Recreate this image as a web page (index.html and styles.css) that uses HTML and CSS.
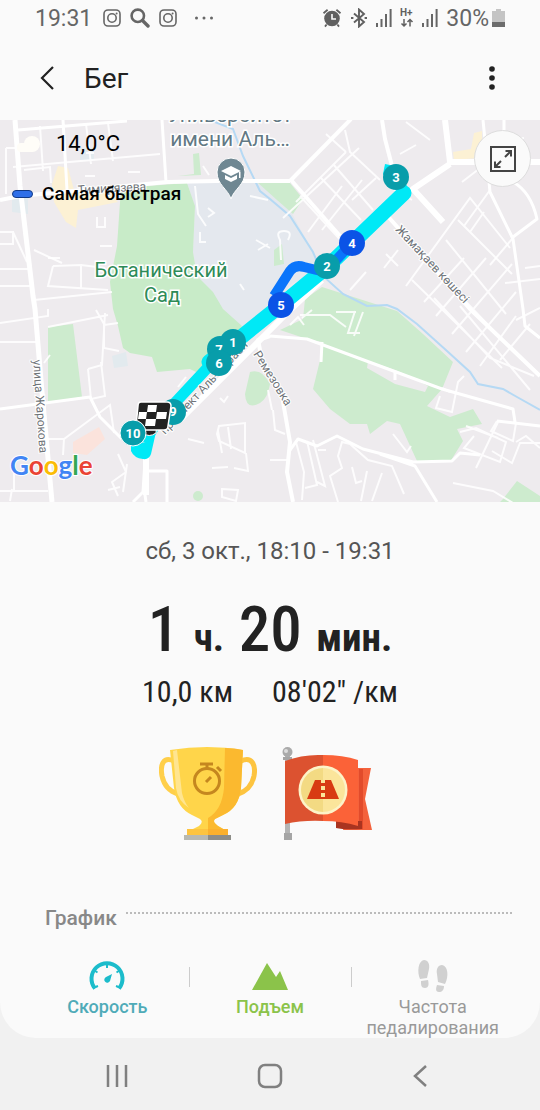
FILE: index.html
```html
<!DOCTYPE html>
<html lang="ru">
<head>
  <meta charset="UTF-8">
  <meta name="viewport" content="width=device-width, initial-scale=1">
  <title>Бег</title>
  <link rel="stylesheet" href="styles.css">
</head>
<body>
  <div class="screen">
    <!-- Status bar -->
    <div class="status">
      <div class="status-left">
        <span class="time">19:31</span>
        <svg width="18" height="18" viewBox="0 0 18 18" fill="none" stroke="#666" stroke-width="1.6">
          <rect x="1" y="1" width="16" height="16" rx="4"/>
          <circle cx="9" cy="9" r="4.2"/>
          <circle cx="13.6" cy="4.4" r="1" fill="#666" stroke="none"/>
        </svg>
        <svg width="20" height="20" viewBox="0 0 20 20" fill="none" stroke="#666">
          <circle cx="7.8" cy="7.8" r="6.2" stroke-width="2.6"/>
          <path d="M12.5 12.5L18 18" stroke-width="3.4" stroke-linecap="round"/>
        </svg>
        <svg width="18" height="18" viewBox="0 0 18 18" fill="none" stroke="#666" stroke-width="1.6">
          <rect x="1" y="1" width="16" height="16" rx="4"/>
          <circle cx="9" cy="9" r="4.2"/>
          <circle cx="13.6" cy="4.4" r="1" fill="#666" stroke="none"/>
        </svg>
        <svg class="dots" width="20" height="6" viewBox="0 0 20 6" fill="#666">
          <circle cx="2.5" cy="3" r="1.5"/><circle cx="10" cy="3" r="1.5"/><circle cx="17.5" cy="3" r="1.5"/>
        </svg>
      </div>
      <div class="status-right">
        <svg width="20" height="20" viewBox="0 0 20 20" fill="none" stroke="#606060">
          <circle cx="10" cy="10.5" r="7.8" fill="#606060" stroke="none"/>
          <path d="M1.5 5.2L5.6 1.8M18.5 5.2L14.4 1.8M4.6 16.5L3 18.6M15.4 16.5L17 18.6" stroke-width="1.8"/>
          <path d="M10 6v5h4" stroke="#fafafa" stroke-width="1.6"/>
        </svg>
        <svg width="18" height="20" viewBox="0 0 18 20" fill="none" stroke="#606060" stroke-width="1.9">
          <path d="M4 5.5l10 8.500-5 4.500V1.500l5 4.500L4 14.500"/>
          <path d="M1 10h2.400M14.600 10H17"/>
        </svg>
        <svg width="16" height="18" viewBox="0 0 16 18" fill="#666">
          <path d="M0 14h2v4H0zM4.500 10h2v8h-2zM9 5h2v13H9zM13.600 0h2v18h-2z"/>
        </svg>
        <svg width="14" height="20" viewBox="0 0 14 20">
          <text class="net" x="0" y="8">H+</text>
          <path d="M4 11v7M1.500 15.500L4 18l2.500-2.500M10 18.500v-7M7.500 14L10 11.500 12.500 14" fill="none" stroke="#606060" stroke-width="1.500"/>
        </svg>
        <svg width="16" height="18" viewBox="0 0 16 18" fill="#666">
          <path d="M0 14h2v4H0zM4.500 10h2v8h-2zM9 5h2v13H9zM13.600 0h2v18h-2z"/>
        </svg>
        <span class="battery">30%
          <svg width="13" height="18" viewBox="0 0 13 18">
            <path d="M4 0h5v2h4v11H0V2h4z" fill="#c4c4c4"/>
            <path d="M0 13h13v5H0z" fill="#6c6c6c"/>
          </svg>
        </span>
      </div>
    </div>

    <!-- Title bar -->
    <header class="header">
      <button class="icon-btn" aria-label="Назад">
        <svg width="16" height="26" viewBox="0 0 16 26" fill="none" stroke="#222" stroke-width="2.2">
          <path d="M14 2L3 13l11 11"/>
        </svg>
      </button>
      <h1>Бег</h1>
      <button class="icon-btn menu" aria-label="Ещё">
        <svg width="6" height="26" viewBox="0 0 6 26" fill="#222">
          <circle cx="3" cy="4" r="2.8"/><circle cx="3" cy="13" r="2.8"/><circle cx="3" cy="22" r="2.8"/>
        </svg>
      </button>
    </header>

    <!-- Map -->
    <div class="map">
      <svg class="map-img" viewBox="0 0 540 382">
        <rect width="540" height="382" fill="#eeebee"/>
        <!-- areas -->
        <path fill="#e4e8ee" d="M187 63L262 62 290 90 313 132 318 150 290 165 262 205 240 210 223 189 197 156 193 132 195 86z"/>
        <g fill="#fcf1d4">
          <path d="M58 46l10 2 6 22 36 4 8 8-40 8-2 18-10-6-12-20-2-18z"/>
          <path d="M453 32l18-3 3-16 8-2v22l8 4-36 3z"/>
        </g>
        <path fill="#fbe3dc" d="M73 322l26-15 6 12-18 16-14-2z"/>
        <path fill="#e2eaee" d="M112 236l14-4 2 14-14 2zM12 74l16 2v18l-16-2zM80 28h14v12H80z"/>
        <g fill="#cdebce">
          <path fill="#c8ebc8" d="M121 68L187 63 195 86 193 132 197 156 213 172 223 189 242 206 213 249 200 254 190 249 157 252 152 237 130 233 123 228 118 206 113 189 110 162 117 126z"/>
          <path d="M48 207L73 204 82 277 48 282zM257 62l33 1 13 16-10 15-16-14z"/>
          <path d="M178 56l16-2-1-20 6-1 2 22zM274 130l8-6 2 20-10 2z"/>
          <path d="M280 210L303 199 305 179 322 167 397 191 423 214 453 242 442 269 427 286 450 297 473 289 482 304 457 309 463 321 450 342 417 341 400 304 387 301 370 314 367 304 350 304 330 289 313 269 322 232 322 222 307 219z"/>
          <path d="M250 252q12-4 20 12-2 14-10 19-14 8-15-9z"/>
          <path d="M503 379l14-18 23 15v6h-40z"/>
          <circle cx="198" cy="376" r="5"/>
        </g>
        <path fill="#eeebee" d="M368 241l30 10 30 15-3 6-30-8-28-16z"/>
        <!-- river -->
        <path fill="none" stroke="#b5d9f4" stroke-width="2" d="M207 -1L233 9 243 36 260 71 270 79 290 96 313 132 323 156 343 174 367 186 387 185 397 189 417 204 447 231 470 252 478 264 503 269 517 277 540 290"/>
        <!-- small streets -->
        <g fill="none" stroke="#fff" stroke-width="2" stroke-opacity=".85">
          <path d="M13 47l147-13M40 6l3 45M86 4l5 40M108 3l5 38M24 50l26-3 1 16M6 28v46M6 28h12M0 112h13v12H0M13 112l14 30M0 166h30M34 180l78-8M53 146l-5 20 60 4M53 146l28-1v25M81 145l24 3M0 149h30M34 130l28 13"/>
          <path d="M195 66l3 28 8 12M97 97v10h8v-10M208 88l6 5-6 4M200 112v10h6M240 164l4 6M250 76l18 4M256 120l14 8M258 130l10-6M281 140l-1-20q-5-9 4-9t4 9M100 126h12M48 138h12M85 56h10M86 33h8M128 52h12M203 46l6 9"/>
          <path d="M0 203l48-7v-7M0 222h40M48 207l60-12M96 190l8 14v24l15 3M104 205l14-2M88 249l14-4 3-52M88 249l3 30 14-3-4-34M48 319h16l46-34 4 28M64 319l-1 16M14 340v30M0 371h48M10 381l2-12M118 334l8 18-14 10 6 14M108 370l12-3M127 344l-4 28M50 235l-6 8M217 314l2-8 26-3v30l-26-12zM222 333l-4-22M228 307l3 22M246 333l2 18-14-3M222 369l16 1-2 11-14-4z"/>
          <path d="M283 98l76-70M296 82l50-50M300 76l46 50M321 58l40 42M333 44l40 46M345 10l5 22 30 28M308 112l34-46M322 110l40-50M352 80l24-22M388 66l24 14M400 34l16-9M326 14l20 18M340 140l20-20M353 133l10-10M384 148l14-18M386 134l12 12M350 170l16-18"/>
          <path d="M430 20l-24-18M488 42l-26 20M524 18l-30 3"/>
          <path d="M406 166l64-88 40 50M412 160l90 88M432 146l76 80M446 120l60 74M458 100l54 54M424 182l40-44M436 196l50-58M452 214l60-70M466 232l50-60M480 246l36-50M490 70l-26 36M484 92l-14 20M534 256l-44-18-56-60M500 240l30-36M530 270l-70-84"/>
          <path d="M516 200l24-12M525 148l15-2M512 119l-22 26M505 163l35-4M440 276l-4 12 16 4 6-30 6-6M442 268l8 4"/>
          <path d="M300 195h30l16 12M355 191l-7 22h12M363 192l-9 24M336 192l20 0M304 205l-6-8-8 8M312 190l-10 8"/>
          <path d="M460 312l16-4 30 14-6 20-36-14 10-12M498 302l-22 46M497 301l-6 10 22 10 3-18M492 331l20 12 8-20h20M466 306l32 12M516 322l10-6 14 12"/>
          <path d="M296 322l8 30-2 28M307 321l10 44-12 3M313 320l12 46-8-4M318 330h8M338 382l-8-26 12-8-4-12 4-14 8 2 18 16 24 6 12 28M367 351l-6 30M382 353l-10 28M352 347l4 16 6-2M453 363l40 8 20 12M393 314l14 18 4-6M270 340h20M272 290l-4-20M273 290l2 20 10 4"/>
          <path d="M188 319l16 4M186 257l-8 10M220 278l4 4 4-6M212 348l16-1"/>
        </g>
        <!-- avenues -->
        <g fill="none" stroke="#fff" stroke-width="4" stroke-linejoin="round">
          <path d="M15 0L20 66 33 176 35 189 42 272 52 382" stroke-width="5"/>
          <path d="M0 80L20 76 167 62 217 61 290 61" stroke-width="4"/>
          <path d="M162 0L166 62M18 10L127 1M63 0L67 70" stroke-width="3"/>
          <path d="M351 -1L291 60 340 116M382 0L385 19 392 46"/>
          <path d="M445 0L450 42H540M450 44L413 69 443 102" stroke-width="6"/>
          <path d="M384 92L470 189 540 256"/>
          <path d="M483 0l3 30 4 42 23 47 10 70 2 17 15 12M513 62q18 10 24 37l-24 18M504 0v14" stroke-width="3"/>
          <path d="M270 216L307 219 442 269 513 289 515 302M497 301L540 306M322 222l-1 20M395 252v8" stroke-width="3"/>
          <path d="M270 216l-12 4 4 20 20 36 8 46-3 30 6 30" stroke-width="4"/>
          <path d="M290 330L298 319 317 326 337 316 363 329 413 342 452 341 460 333 480 335M380 334l35 12 22 36" stroke-width="3"/>
          <path d="M0 289L90 277 100 297 122 319" stroke-width="3"/>
          <path d="M322 160L290 190 180 300" stroke-width="6"/>
          <path d="M146 325L143 372 133 382M144 368l2 14M145 351h22v31" stroke-width="3"/>
          <path d="M146 325v50" stroke-width="6"/>
        </g>
        <!-- route -->
        <path fill="none" stroke="#00e9f6" stroke-width="11" stroke-linejoin="round" d="M144 322L158 301 212 243"/>
        <path fill="#00e9f6" d="M131 324l16-2 9-10-5 22q-2 6-8 5-9-1-12-8z"/>
        <path fill="none" stroke="#00e9f6" stroke-width="15" stroke-linejoin="round" stroke-linecap="round" d="M209 242L235 222 281 185 327 147 352 123 404 73"/>
        <path fill="#00e9f6" d="M385 44l10 2 12 20-14 2-10-14z"/>
        <path fill="none" stroke="#0a75fb" stroke-width="10" stroke-linejoin="round" d="M352 123L325 152 304 147Q295 144 290 151L274 176"/>
        <!-- street names -->
        <g class="street">
          <text x="78" y="74" transform="rotate(-3 78 74)">Тимирязева</text>
          <text x="395" y="110" transform="rotate(47 395 110)">Жамақаев көшесі</text>
          <text x="33" y="240" transform="rotate(86 33 240)">улица Жарокова</text>
          <text x="253" y="234" transform="rotate(58 253 234)">Ремезовка</text>
          <text x="165" y="315" transform="rotate(-47 165 315)">проспект Аль-Фараби</text>
        </g>
        <g class="uni">
          <text x="230" y="2">Университет</text>
          <text x="230" y="26">имени Аль…</text>
        </g>
        <g class="park">
          <text x="161" y="157">Ботанический</text>
          <text x="162" y="182">Сад</text>
        </g>
        <!-- university pin -->
        <path fill="#6f8792" stroke="#fff" d="M231 79c-3-10-14-14-14-27a14 14 0 0 1 28 0c0 13-11 17-14 27z"/>
        <path fill="#fff" d="M221 51l10-5 10 5-10 5zM225 55l6 3 6-3v4l-6 3-6-3zM239 52h1.500v6H239z"/>
        <!-- kilometre marks -->
        <g class="mark">
          <circle cx="173" cy="292" r="13"/><text x="173" y="296">9</text>
          <circle cx="220" cy="229" r="13"/>
          <circle cx="233" cy="222" r="13"/><text x="233" y="227">1</text>
          <text x="219" y="234">7</text>
          <circle cx="219" cy="243" r="13"/><text x="219" y="248">6</text>
          <circle cx="396" cy="57" r="13"/><text x="396" y="62">3</text>
          <circle class="fast" cx="352" cy="123" r="13"/><text x="352" y="128">4</text>
          <circle cx="327" cy="146" r="13"/><text x="327" y="151">2</text>
          <circle class="fast" cx="281" cy="185" r="13"/><text x="281" y="190">5</text>
        </g>
        <!-- finish flag -->
        <path fill="#222" stroke="#fff" d="M143 307l4-6h10l-1 12q-7 5-13 0z"/>
        <path fill="#222" stroke="#fff" stroke-width="1.5" d="M141 282h26q4 0 4 4l-3 20q0 4-4 4h-26q-3 0-2-4l2-20q0-4 3-4z"/>
        <path fill="#fff" d="M148 285h9l-1 7h-9zM157 292h10l-1 7h-10zM139 292h8l-1 7h-8zM146 299h10l-1 7h-10z"/>
        <g class="mark">
          <circle class="last" cx="133" cy="313" r="13"/><text x="133" y="318">10</text>
        </g>
        <text class="google" x="10" y="355"><tspan fill="#4285f4">G</tspan><tspan fill="#ea4335">o</tspan><tspan fill="#fbbc05">o</tspan><tspan fill="#4285f4">g</tspan><tspan fill="#34a853">l</tspan><tspan fill="#ea4335">e</tspan></text>
      </svg>
      <div class="legend">
        <div class="weather">
          <svg width="24" height="18" viewBox="0 0 24 18" fill="#fffdf8">
            <circle cx="15" cy="9" r="8"/><rect x="0" y="8" width="18" height="9" rx="4"/>
          </svg>
          <span>14,0°C</span>
        </div>
        <div class="fastest"><i></i>Самая быстрая</div>
      </div>
      <button class="expand" aria-label="На весь экран">
        <svg width="26" height="26" viewBox="0 0 26 26" fill="none" stroke="#444" stroke-width="2">
          <rect x="1" y="1" width="24" height="24"/>
          <path d="M15 11l6-6M15.500 5H21v5.500M11 15l-6 6M5 15.500V21h5.500"/>
        </svg>
      </button>
    </div>

    <!-- Workout summary -->
    <section class="summary">
      <p class="date">сб, 3 окт., 18:10 - 19:31</p>
      <p class="duration">1 <b>ч.</b> 20 <b>мин.</b></p>
      <p class="stats"><span>10,0 км</span><span>08'02" /км</span></p>
      <div class="awards">
        <svg width="98" height="98" viewBox="0 0 98 98">
          <g fill="none" stroke="#ffcf4a" stroke-width="5">
            <path d="M15 15C4 10 1 19 3 30q3 14 16 18"/>
            <path d="M82 15c11-5 15 4 13 15q-3 14-16 18" stroke="#fdc440"/>
          </g>
          <path fill="#ffd54a" d="M11 4Q49-2 84 4L82 42Q80 62 64 69L56 73Q53 76 59 80L66 84H32L40 80Q45 76 41 73L33 69Q18 62 15 42z"/>
          <path fill="#fbb92f" d="M66 2q10 0 18 2l-2 38q-2 20-18 27l-8 4q-3 3 3 7l7 4H49V72q14-8 16-30z"/>
          <path fill="#ffe590" d="M14 5l4-1 5 43q2 9 7 15-11-7-13-20z"/>
          <path fill="#fdc440" d="M28 83h41v8H28z"/><path fill="#fbb02d" d="M49 83h20v8H49z"/>
          <path fill="#b8b9b2" d="M25 89h24v5H25z"/><path fill="#8d8d88" d="M49 89h23v5H49z"/>
          <g fill="none" stroke="#c5871f" stroke-width="3">
            <circle cx="48" cy="35" r="12.500"/>
            <path d="M41 18h13M48 19v4M58 21l4 4M47 36l5-5"/>
          </g>
        </svg>
        <svg width="92" height="98" viewBox="0 0 92 98">
          <path fill="#f4623c" d="M76 22h14l-6 31 7 31H62z"/>
          <path fill="#e24b2b" d="M78 23h4v60h-4z"/>
          <path fill="#a93420" d="M55 75h26v8q-18 1-26-1z"/>
          <path fill="#b4b4b4" d="M4 9h5v83H4z"/>
          <circle cx="6.500" cy="6" r="5" fill="#aaa"/><circle cx="5" cy="5" r="2" fill="#ddd"/>
          <path fill="#a5a5a5" d="M3 87h8v7H3zM2 11h9v3H2z"/>
          <path fill="#dc5230" d="M4 15q18-7 38-6v66q-20-1-38 3z"/>
          <path fill="#fb6238" d="M42 9q20 0 35 5v66q-16-5-35-5z"/>
          <circle cx="42" cy="44" r="24.500" fill="#fdf3c8"/>
          <path fill="#f3da83" d="M42 22a22 22 0 0 0 0 44z"/>
          <path fill="#fbe59b" d="M42 22a22 22 0 0 1 0 44z"/>
          <path fill="#d83a12" d="M34 34h16l8 19H26z"/>
          <path fill="#fbe59b" d="M40 34h4v3h-4zM40 40h4v4h-4zM40 47h4v4h-4z"/>
        </svg>
      </div>
    </section>

    <!-- Chart tabs -->
    <section class="chart">
      <div class="chart-title"><h2>График</h2><span></span></div>
      <div class="tabs">
        <button class="tab speed">
          <svg width="38" height="36" viewBox="0 0 38 36">
            <path fill="none" stroke="#1cbccb" stroke-width="4" d="M7 30.500A15.500 15.500 0 1 1 31 30.500"/>
            <path fill="none" stroke="#1cbccb" stroke-width="2" d="M19 6v4M9.500 14.500l-3-2M28.500 14.500l3-2M5 30l5-2M33 30l-5-2"/>
            <path fill="#1cbccb" d="M24 16l-2 7a3 3 0 1 1-4-4z"/>
          </svg>
          Скорость
        </button>
        <button class="tab climb">
          <svg width="38" height="36" viewBox="0 0 38 36" fill="#8bc34a">
            <path d="M1 32L16 5l9 14 4-6 8 19z"/>
          </svg>
          Подъем
        </button>
        <button class="tab">
          <svg width="38" height="36" viewBox="0 0 38 36" fill="#d0d0d0">
            <path d="M10 2c4 0 6 4 5 9l-2 9-7 1C3 14 4 3 10 2zM7 23l7-1c1 4 1 8-3 8s-4-3-4-7z"/>
            <path d="M28 7c-4 0-6 4-5 9l1 8 7 2c4-8 3-18-3-19zM23 27l7 1c0 4-2 6-5 6-4 0-3-4-2-7z"/>
          </svg>
          Частота педалирования
        </button>
      </div>
    </section>
  </div>

  <!-- System navigation -->
  <nav class="nav">
    <button aria-label="Недавние">
      <svg width="22" height="24" viewBox="0 0 22 24" fill="none" stroke="#808080" stroke-width="2.5">
        <path d="M2 1v22M11 1v22M20 1v22"/>
      </svg>
    </button>
    <button aria-label="Домой">
      <svg width="26" height="26" viewBox="0 0 26 26" fill="none" stroke="#808080" stroke-width="2.5">
        <rect x="2" y="2" width="22" height="22" rx="6"/>
      </svg>
    </button>
    <button aria-label="Назад">
      <svg width="16" height="24" viewBox="0 0 16 24" fill="none" stroke="#808080" stroke-width="2.5">
        <path d="M14 2L3 12l11 10"/>
      </svg>
    </button>
  </nav>
</body>
</html>
```
FILE: styles.css
```css
* { box-sizing: border-box; }
body { margin: 0; min-height: 100vh; background: #f1f1f1; font-family: Roboto, "Noto Sans", sans-serif; color: #222; }
h1, h2, p { margin: 0; font-weight: 400; }
button { background: none; border: none; padding: 0; font-family: inherit; color: inherit; cursor: pointer; }
svg { display: block; flex: none; }

.screen { background: #fafafa; border-radius: 0 0 36px 36px; overflow: hidden; }

.status { display: flex; justify-content: space-between; align-items: center; height: 36px; padding: 0 35px; font-size: 23px; color: #666; }
.status-left, .status-right { display: flex; align-items: center; gap: 9px; }
.status-right { gap: 8px; }
.time { margin-right: 2px; }
.dots { margin-left: 8px; }
.net { font-size: 10px; font-weight: 700; fill: #606060; }
.battery { display: flex; align-items: center; gap: 3px; }

.header { display: flex; align-items: center; height: 84px; padding: 0 45px 0 39px; }
.header h1 { flex: 1; margin-left: 29px; font-size: 28px; }

.map { position: relative; }
.map-img { width: 100%; height: auto; }
.street { font-size: 12px; fill: #6f7479; stroke: #fff; stroke-width: 2px; paint-order: stroke; }
.uni, .park { font-size: 20px; text-anchor: middle; stroke: #fff; stroke-width: 3px; paint-order: stroke; }
.uni { font-size: 21px; fill: #627984; }
.park { fill: #2e8b57; }
.mark { font-size: 13px; font-weight: 700; text-anchor: middle; fill: #fff; }
.mark circle { fill: #089daa; }
.mark .fast { fill: #0b53e6; }
.mark .last { stroke: #fff; }
.google { font-family: Lato, sans-serif; font-size: 26px; font-weight: 700; stroke: #fff; stroke-width: 2px; paint-order: stroke; }
.legend { position: absolute; top: 10px; left: 12px; color: #000; }
.weather { display: flex; align-items: center; gap: 15px; padding-left: 5px; font-size: 22px; line-height: 28px; }
.fastest { display: flex; align-items: center; gap: 9px; margin-top: 24px; font-size: 19px; line-height: 24px; font-weight: 500; }
.fastest i { width: 21px; height: 8px; border: 1px solid #123a86; border-radius: 4px; background: #2f6fe8; }
.expand { position: absolute; top: 10px; right: 9px; display: flex; align-items: center; justify-content: center; width: 57px; height: 57px; border: 1px solid #ddd; border-radius: 50%; background: #fafafa; }

.summary { padding-top: 35px; text-align: center; }
.date { font-size: 24px; line-height: 28px; color: #555; }
.duration { margin-top: 29px; font-family: "Roboto Condensed", Roboto, sans-serif; font-size: 63px; line-height: 72px; font-weight: 500; }
.duration b { font-size: 39px; }
.stats { display: flex; justify-content: center; gap: 39px; font-family: "Roboto Condensed", Roboto, sans-serif; font-size: 30px; line-height: 36px; }
.awards { display: flex; justify-content: center; gap: 24px; margin-top: 36px; padding-right: 8px; }

.chart { padding-top: 60px; }
.chart-title { display: flex; padding: 0 28px 0 45px; }
.chart-title h2 { font-size: 21px; line-height: 28px; font-weight: 500; color: #888; }
.chart-title span { flex: 1; height: 0; margin: 8px 0 0 9px; border-top: 2px dotted #bbb; }
.tabs { display: flex; padding: 26px 26px 0; }
.tab { position: relative; flex: 1; display: flex; flex-direction: column; align-items: center; gap: 2px; font-size: 18px; line-height: 21px; color: #999; }
.tab + .tab::before { content: ""; position: absolute; left: 0; top: 9px; height: 20px; border-left: 1px solid #ccc; }
.speed { color: #4fabb8; font-weight: 500; }
.climb { color: #8bc34a; font-weight: 500; }

.nav { display: flex; justify-content: space-between; align-items: center; height: 72px; padding: 4px 112px 0 106px; }
```
